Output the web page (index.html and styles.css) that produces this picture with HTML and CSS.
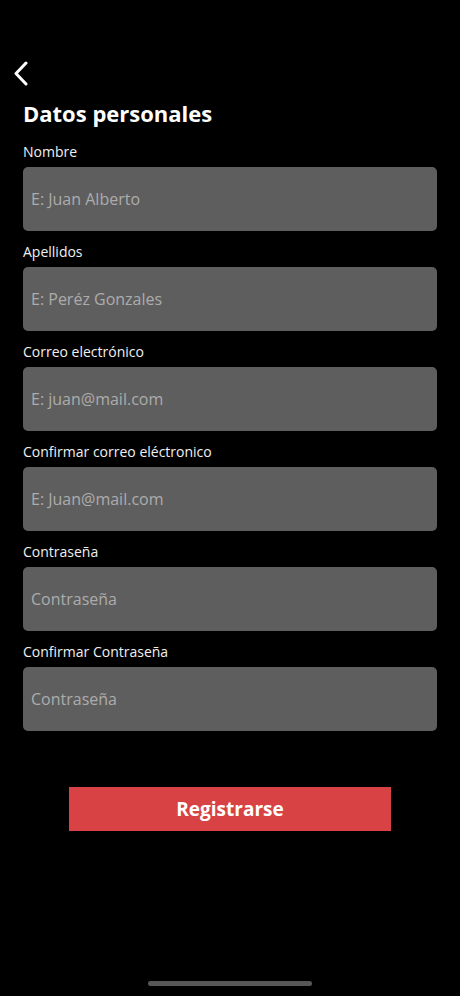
FILE: index.html
```html
<!DOCTYPE html>
<html lang="es">
<head>
<meta charset="utf-8">
<title>Datos personales</title>
<link rel="stylesheet" href="styles.css">
</head>
<body>
<main class="screen">
  <button class="back" aria-label="Atrás">
    <svg width="16" height="26" viewBox="0 0 16 26"><polyline points="13,2 3,12.5 13,23" fill="none" stroke="#fff" stroke-width="3" stroke-linecap="round" stroke-linejoin="round"/></svg>
  </button>
  <h1 class="title">Datos personales</h1>
  <form class="form">
    <label class="field"><span class="label">Nombre</span><input class="input" type="text" placeholder="E: Juan Alberto"></label>
    <label class="field"><span class="label">Apellidos</span><input class="input" type="text" placeholder="E: Peréz Gonzales"></label>
    <label class="field"><span class="label">Correo electrónico</span><input class="input" type="email" placeholder="E: juan@mail.com"></label>
    <label class="field"><span class="label">Confirmar correo eléctronico</span><input class="input" type="email" placeholder="E: Juan@mail.com"></label>
    <label class="field"><span class="label">Contraseña</span><input class="input" type="password" placeholder="Contraseña"></label>
    <label class="field"><span class="label">Confirmar Contraseña</span><input class="input" type="password" placeholder="Contraseña"></label>
    <div class="actions"><button class="submit" type="button">Registrarse</button></div>
  </form>
</main>
<div class="home-indicator"></div>
</body>
</html>
```
FILE: styles.css
```css
* { box-sizing: border-box; }
html, body {
  margin: 0;
  background: #000;
  font-family: "Open Sans", "Noto Sans", sans-serif;
  color: #f2f2f2;
}
body { min-height: 996px; position: relative; }
.screen {
  padding: 61px 23px 0;
  display: flex;
  flex-direction: column;
}
.back {
  align-self: flex-start;
  background: none;
  border: 0;
  padding: 0;
  margin-left: -10px;
  width: 16px;
  height: 26px;
  display: flex;
}
.title {
  margin: 11px 0 0;
  font-size: 22px;
  line-height: 30px;
  font-weight: 700;
  color: #fff;
}
.form {
  margin-top: 14px;
  display: flex;
  flex-direction: column;
  gap: 11px;
}
.field {
  display: flex;
  flex-direction: column;
  gap: 6px;
}
.label {
  font-size: 14px;
  line-height: 19px;
  color: #f0f0f0;
}
.input {
  height: 64px;
  width: 100%;
  border: 0;
  border-radius: 5px;
  background: #5f5e5e;
  padding: 0 8px;
  font-family: "Open Sans", "Noto Sans", sans-serif;
  font-size: 16px;
  color: #eee;
  outline: none;
}
.input::placeholder { color: #acacac; opacity: 1; }
.actions {
  margin-top: 45px;
  display: flex;
  justify-content: center;
}
.submit {
  width: 322px;
  height: 44px;
  border: 0;
  border-radius: 0;
  background: #d84245;
  color: #fff;
  font-family: "Open Sans", "Noto Sans", sans-serif;
  font-weight: 700;
  font-size: 19px;
}
.home-indicator {
  position: absolute;
  left: 148px;
  top: 981px;
  width: 164px;
  height: 5px;
  border-radius: 3px;
  background: #575757;
}
```
